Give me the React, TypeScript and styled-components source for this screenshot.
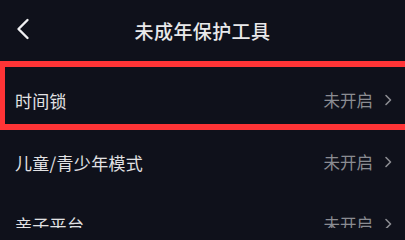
import React from "react";
import styled, { createGlobalStyle } from "styled-components";

const Global = createGlobalStyle`
  html, body { margin: 0; padding: 0; background: #0f111b; }
  body { font-family: "Noto Sans CJK SC", "Noto Sans", sans-serif; overflow: hidden; }
`;

const Page = styled.div`
  position: relative;
  width: 405px;
  height: 228px;
  background: #0f111b;
  overflow: hidden;
`;

const Header = styled.div`
  height: 60px;
  display: flex;
  align-items: center;
  justify-content: center;
  position: relative;
`;

const BackButton = styled.div`
  position: absolute;
  left: 16px;
  top: 18px;
  width: 14px;
  height: 22px;
  display: flex;
`;

const Title = styled.div`
  color: #e9e9eb;
  font-size: 19px;
  font-weight: 500;
  letter-spacing: 0.4px;
`;

const List = styled.div`
  display: flex;
  flex-direction: column;
  padding-top: 9px;
`;

const Row = styled.div`
  height: 62px;
  display: flex;
  align-items: center;
  justify-content: space-between;
  padding: 0 12px 0 15px;
`;

const Label = styled.div`
  color: #e2e2e4;
  font-size: 17px;
  letter-spacing: 0.3px;
`;

const Status = styled.div`
  display: flex;
  align-items: center;
  gap: 10px;
  color: #8b8c92;
  font-size: 16.5px;
`;

const Highlight = styled.div`
  position: absolute;
  left: 0;
  top: 61px;
  width: 420px;
  height: 57px;
  border: 6px solid #ff3436;
  border-left-width: 5px;
  pointer-events: none;
`;

const Chevron = () => (
  <svg width="10" height="12" viewBox="0 0 10 12">
    <path d="M3 1.5 L7.5 6 L3 10.5" fill="none" stroke="#8b8c92" strokeWidth="1.6" strokeLinecap="round" strokeLinejoin="round" />
  </svg>
);

const rows = ["时间锁", "儿童/青少年模式", "亲子平台"];

export default function App() {
  return (
    <Page>
      <Global />
      <Header>
        <BackButton>
          <svg width="14" height="22" viewBox="0 0 14 22">
            <path d="M11.5 2 L2.5 11 L11.5 20" fill="none" stroke="#f0f0f2" strokeWidth="2.4" strokeLinecap="round" strokeLinejoin="round" />
          </svg>
        </BackButton>
        <Title>未成年保护工具</Title>
      </Header>
      <List>
        {rows.map((r) => (
          <Row key={r}>
            <Label>{r}</Label>
            <Status>
              未开启
              <Chevron />
            </Status>
          </Row>
        ))}
      </List>
      <Highlight />
    </Page>
  );
}
